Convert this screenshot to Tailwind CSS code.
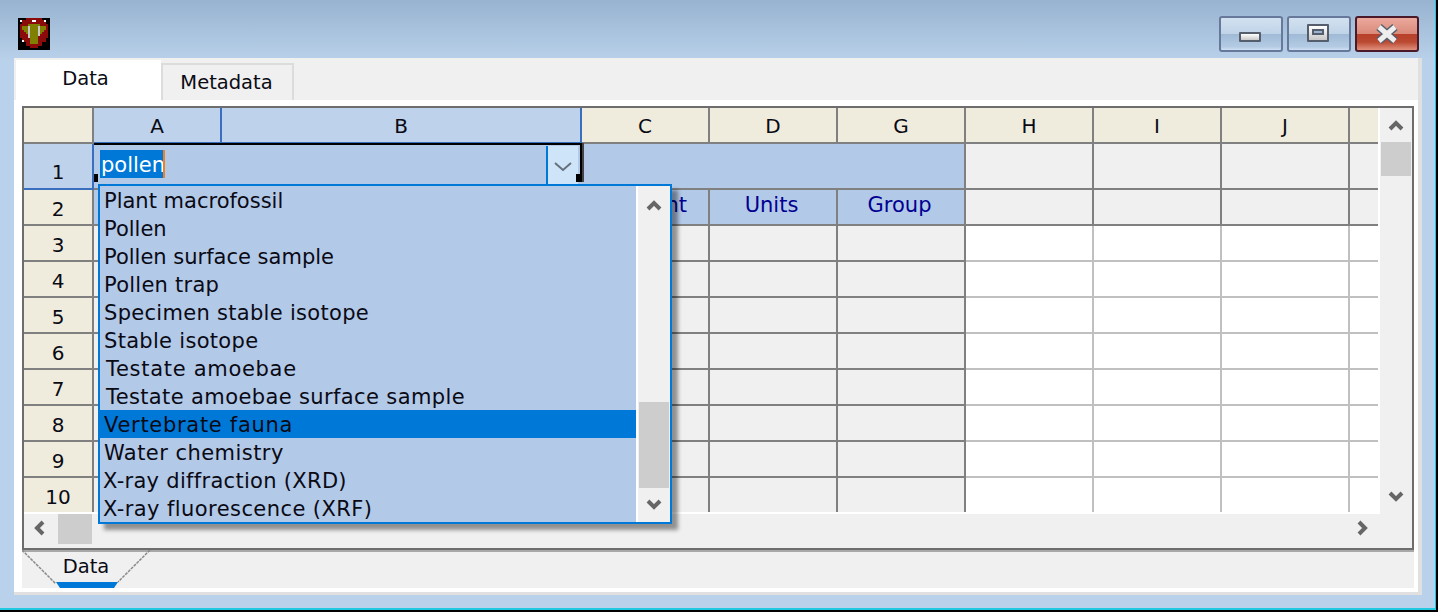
<!DOCTYPE html>
<html lang="en">
<head>
<meta charset="UTF-8">
<title>Data</title>
<script src="https://cdn.jsdelivr.net/npm/@tailwindcss/browser@4"></script>
</head>
<body class="bg-white overflow-hidden">
<div class="w-[1438px] h-[612px] border-r-2 border-b-2 border-black">
<div class="h-full bg-gradient-to-b from-[#98b3d0] via-[#b9d1ea] via-[10%] to-[#b9d1ea] border-r border-b-2 border-[#20c8e0] font-['DejaVu_Sans',sans-serif] text-[20px] text-[#0a0a14] pl-[2px]">
  <!-- title bar -->
  <div class="h-[58px] flex items-start justify-between pl-[16px] pr-[16px]">
    <svg class="mt-[18px]" width="32" height="32" viewBox="0 0 16 16" shape-rendering="crispEdges">
      <rect width="16" height="16" fill="#000"/>
      <path d="M4 0h8v1h2v2h1v7h-1v2h-2v2h-2v1H6v-1H4v-2H2v-2H1V3h1V1h2z" fill="#8b0a0a"/>
      <path d="M2 4h3v-1h6v1h3v2h-1v1h-1v1h-2v5H6V8H4V7H3V6H2z" fill="#808000"/>
      <rect x="5" y="4" width="1" height="6" fill="#c8c8c8"/>
      <rect x="10" y="4" width="1" height="5" fill="#c8c8c8"/>
      <rect x="1" y="1" width="1" height="1" fill="#fff"/>
      <rect x="7" y="1" width="2" height="1" fill="#fff"/>
      <rect x="13" y="1" width="1" height="1" fill="#fff"/>
      <rect x="2" y="11" width="1" height="1" fill="#fff"/>
      <rect x="1" y="13" width="2" height="3" fill="#000"/>
      <rect x="12" y="12" width="4" height="4" fill="#000"/>
    </svg>
    <div class="flex gap-[4px] mt-[16px]">
      <button class="relative w-[64px] h-[36px] rounded-[3px] border-2 border-[#66799a] bg-[linear-gradient(#d3e1f0,#bfd3e8_50%,#a0bad6_51%,#b4cbe4_90%,#cfe0f2)]">
        <span class="absolute left-[18px] top-[14px] w-[22px] h-[10px] bg-gradient-to-b from-white to-[#c8c8c8] border-2 border-[#555e6c] rounded-[1px]"></span>
      </button>
      <button class="relative w-[64px] h-[36px] rounded-[3px] border-2 border-[#66799a] bg-[linear-gradient(#d3e1f0,#bfd3e8_50%,#a0bad6_51%,#b4cbe4_90%,#cfe0f2)]">
        <span class="absolute left-[18px] top-[6px] w-[22px] h-[18px] bg-gradient-to-b from-white to-[#c8c8c8] border-2 border-[#555e6c] rounded-[1px] pt-[3px] px-[3px]"><span class="block w-[12px] h-[6px] border-2 border-[#555e6c] bg-[#9db4d0]"></span></span>
      </button>
      <button class="relative w-[64px] h-[36px] rounded-[3px] border-2 border-[#4a1a28] bg-[linear-gradient(#eba99c,#d98a7a_50%,#b8402a_51%,#bb4a32_75%,#e0907e)]">
        <svg class="absolute left-[18px] top-[6px]" width="24" height="20" viewBox="0 0 24 20"><path d="M4 3l16 14M20 3L4 17" fill="none" stroke="#555e6c" stroke-width="8"/><path d="M4 3l16 14M20 3L4 17" fill="none" stroke="#eee" stroke-width="5"/></svg>
      </button>
    </div>
  </div>

  <!-- panel -->
  <div class="ml-[12px] w-[1408px] h-[537px] bg-[#f0f0f0] border-b-[3px] border-r-[4px] border-[#e0e0e0]">
    <!-- tabs -->
    <div class="flex h-[42px] pl-[2px] items-end text-[19.5px]">
      <div class="w-[145px] h-[40px] bg-white flex items-center justify-center pb-[2px] pr-[6px]">Data</div>
      <div class="w-[133px] h-[37px] border-2 border-b-0 border-[#dcdcdc] flex items-center justify-center pr-[2px]">Metadata</div>
    </div>
    <!-- page -->
    <div class="w-[1404px] h-[492px] bg-white pt-[6px] pl-[8px] pr-[4px] pb-[4px]">
      <div class="relative h-[482px] bg-[#f0f0f0]">
        <div class="relative w-[1392px] h-[444px] border-2 border-[#6d6d6d] shadow-[0_2px_0_#a8a8a8]">
          <div class="flex h-[406px]">
            <div id="sheet" class="grid grid-cols-[70px_128px_360px_128px_128px_128px_128px_128px_128px_32px] grid-rows-[36px_46px_repeat(9,36px)] w-[1354px] h-[406px] overflow-hidden border-b-2 border-white bg-white text-center"></div>
            <!-- vertical scrollbar -->
            <div class="w-[34px] bg-[#f0f0f0] border-l-2 border-white flex flex-col items-center">
              <svg class="mt-[11px]" width="16" height="12" viewBox="0 0 16 12"><path d="M2 10l6-6 6 6" fill="none" stroke="#666" stroke-width="4"/></svg>
              <div class="w-[30px] h-[34px] bg-[#cdcdcd] mt-[11px]"></div>
              <svg class="mt-auto mb-[11px]" width="16" height="12" viewBox="0 0 16 12"><path d="M2 2l6 6 6-6" fill="none" stroke="#666" stroke-width="4"/></svg>
            </div>
          </div>
          <!-- horizontal scrollbar -->
          <div class="h-[34px] flex items-start">
            <svg class="ml-[9px] mt-[6px]" width="12" height="16" viewBox="0 0 12 16"><path d="M10 2L4 8l6 6" fill="none" stroke="#666" stroke-width="4"/></svg>
            <div class="ml-[13px] w-[34px] h-[30px] bg-[#cdcdcd]"></div>
            <svg class="ml-auto mr-[43px] mt-[6px]" width="12" height="16" viewBox="0 0 12 16"><path d="M2 2l6 6-6 6" fill="none" stroke="#666" stroke-width="4"/></svg>
          </div>

          <!-- cell editor -->
          <div class="absolute left-[70px] top-[35px] w-[490px] h-[41px] border-t-2 border-black">
            <div class="absolute left-[6px] top-[5px] h-[28px] w-[62px] bg-[#0078d7] text-white text-[21px] leading-[30px] pl-[1px] border-r-2 border-[#f08020] box-content overflow-hidden">pollen</div>
            <div class="absolute left-[452px] top-[1px] w-[32px] h-[38px] bg-[#cde4f9] border-l-2 border-[#0078d7] flex items-center justify-center pt-[3px]">
              <svg width="20" height="12" viewBox="0 0 20 12"><path d="M2 2l8 7 8-7" fill="none" stroke="#66717d" stroke-width="2"/></svg>
            </div>
            <div class="absolute right-0 top-[-2px] w-[4px] h-[39px] bg-[linear-gradient(90deg,#000_50%,#444_50%)]"></div>
            <div class="absolute left-0 top-[29px] w-[4px] h-[8px] bg-black"></div>
            <div class="absolute left-[482px] top-[29px] w-[4px] h-[8px] bg-black"></div>
          </div>

          <!-- dropdown list -->
          <div class="absolute left-[74px] top-[76px] w-[574px] h-[340px] border-2 border-[#0078d7] bg-[#b3c9e8] flex shadow-[6px_6px_4px_rgba(0,0,0,0.4)]">
            <ul class="w-[536px] leading-[31px] whitespace-nowrap text-[21px]">
              <li class="h-[28px] pl-[4px]">Plant macrofossil</li>
              <li class="h-[28px] pl-[4px]">Pollen</li>
              <li class="h-[28px] pl-[4px]">Pollen surface sample</li>
              <li class="h-[28px] pl-[4px] tracking-[0.25px]">Pollen trap</li>
              <li class="h-[28px] pl-[4px] tracking-[0.3px]">Specimen stable isotope</li>
              <li class="h-[28px] pl-[4px] tracking-[0.3px]">Stable isotope</li>
              <li class="h-[28px] pl-[6px] tracking-[0.7px]">Testate amoebae</li>
              <li class="h-[28px] pl-[6px] tracking-[0.38px]">Testate amoebae surface sample</li>
              <li class="h-[28px] pl-[4px] tracking-[0.7px] bg-[#0078d7]">Vertebrate fauna</li>
              <li class="h-[28px] pl-[4px] tracking-[0.45px]">Water chemistry</li>
              <li class="h-[28px] pl-[3px] tracking-[0.3px]">X-ray diffraction (XRD)</li>
              <li class="h-[28px] pl-[3px] tracking-[0.42px]">X-ray fluorescence (XRF)</li>
            </ul>
            <div class="w-[34px] bg-[#f0f0f0] border-l-2 border-white flex flex-col items-center">
              <svg class="mt-[13px]" width="16" height="12" viewBox="0 0 16 12"><path d="M2 10l6-6 6 6" fill="none" stroke="#666" stroke-width="4"/></svg>
              <div class="w-[30px] h-[86px] bg-[#cdcdcd] mt-[191px]"></div>
              <svg class="mt-[11px]" width="16" height="12" viewBox="0 0 16 12"><path d="M2 2l6 6 6-6" fill="none" stroke="#666" stroke-width="4"/></svg>
            </div>
          </div>
        </div>

        <!-- sheet tab -->
        <div class="relative h-[38px] w-[130px] flex justify-center text-[19.5px] pr-[2px]">
          <svg class="absolute left-0 top-0" width="130" height="38" viewBox="0 0 130 38"><path d="M0 0l34 34M128 0L96 32" fill="none" stroke="#8a8a8a" stroke-width="1.5" stroke-dasharray="3 1"/><path d="M34 32h62l-4 6H38z" fill="#0078d7"/></svg>
          <span class="relative pt-[3px] leading-[28px]">Data</span>
        </div>
      </div>
    </div>
  </div>
</div>
</div>
<script>
  // grid cells: header row, merged row 1, heading row 2, then data rows
  const sheet = document.getElementById('sheet');
  const cols = ['A', 'B', 'C', 'D', 'G', 'H', 'I', 'J', ''];
  function add(cls, text) {
    const d = document.createElement('div');
    d.className = cls + ' flex items-center justify-center border-r-2 border-b-2';
    d.textContent = text || '';
    sheet.appendChild(d);
  }
  add('bg-[#efecdd] border-[#808080]');
  cols.forEach((c, i) => {
    if (i < 2) add('bg-[#bfd2ec] border-[#3a6fc0] pt-[1px]', c);
    else add('bg-[#efecdd] border-[#808080] pt-[1px]', c);
  });
  add('bg-[#bfd2ec] border-[#3a6fc0] !items-end pb-[1px]', '1');
  const merged = document.createElement('div');
  merged.className = 'col-span-5 bg-[#b3c9e8] border-r-2 border-b-2 border-[#808080]';
  sheet.appendChild(merged);
  for (let i = 0; i < 4; i++) add('bg-[#f0f0f0] border-[#808080]');
  add('bg-[#efecdd] border-[#808080] pt-[3px]', '2');
  ['', '', 'Element', 'Units', 'Group'].forEach(t => add('bg-[#b3c9e8] border-[#808080] text-[#000090] text-[21px] pb-[3px] pr-[3px]', t));
  for (let i = 0; i < 4; i++) add('bg-[#f0f0f0] border-[#808080]');
  for (let r = 3; r <= 10; r++) {
    add('bg-[#efecdd] border-[#808080] pt-[3px]', String(r));
    for (let i = 0; i < 5; i++) add('bg-[#f0f0f0] border-[#808080]');
    for (let i = 0; i < 4; i++) add('bg-white border-[#c0c0c0]');
  }
</script>
</body>
</html>
